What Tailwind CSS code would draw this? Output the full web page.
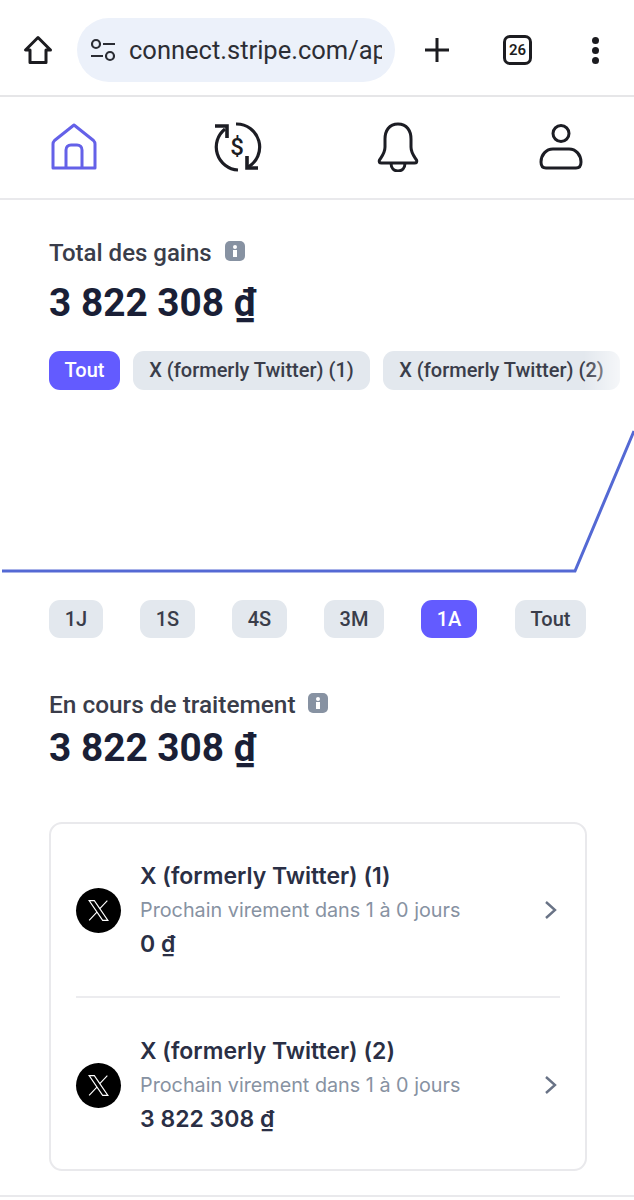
<!DOCTYPE html>
<html lang="fr">
<head>
    <meta charset="UTF-8">
    <meta name="viewport" content="width=device-width, initial-scale=1.0">
    <title>Stripe Connect</title>
    <script src="https://cdn.jsdelivr.net/npm/@tailwindcss/browser@4"></script>
</head>
<body class="bg-white font-['Inter',sans-serif] text-[#1a1f36] w-[634px] h-[1200px] overflow-hidden">
    <!-- browser bar -->
    <div class="h-[97px] border-b-2 border-[#e6e6e8] flex items-center pt-[5px] relative">
        <svg class="ml-[22px] w-[32px] h-[32px]" viewBox="0 0 32 32" fill="none" stroke="#1c1c20" stroke-width="3" stroke-linejoin="round"><path d="M16 3.500 3.500 16H8v12.500h16V16h4.500z"/></svg>
        <div class="ml-[23px] w-[318px] h-[64px] rounded-[32px] bg-[#ecf1fa] flex items-center overflow-hidden">
            <svg class="ml-[13px] shrink-0 w-[26px] h-[24px]" viewBox="0 0 26 24" fill="none" stroke="#2a2c33" stroke-width="2.200"><circle cx="6" cy="6" r="4"/><path d="M13 6h12M1 18h12"/><circle cx="20" cy="18" r="4"/></svg>
            <div class="ml-[13px] w-[253px] overflow-hidden whitespace-nowrap font-['Roboto',sans-serif] text-[25.500px] text-[#2c2e35]">connect.stripe.com/ap</div>
        </div>
        <svg class="ml-[28px] w-[28px] h-[28px]" viewBox="0 0 28 28" stroke="#1c1c20" stroke-width="3"><path d="M14 2v24M2 14h24"/></svg>
        <div class="ml-[52px] w-[29px] h-[30px] rounded-[7px] border-[3px] border-[#1c1c20] flex items-center justify-center font-['Roboto',sans-serif] font-semibold text-[15px] text-[#1c1c20]">26</div>
        <div class="absolute left-[592px] top-[37px] flex flex-col gap-[3px]">
            <div class="w-[7px] h-[7px] rounded-full bg-[#1c1c20]"></div>
            <div class="w-[7px] h-[7px] rounded-full bg-[#1c1c20]"></div>
            <div class="w-[7px] h-[7px] rounded-full bg-[#1c1c20]"></div>
        </div>
    </div>

    <!-- app nav -->
    <div class="h-[103px] border-b-2 border-[#e9e9ec] relative">
        <svg class="absolute left-[50px] top-[26px] w-[48px] h-[48px]" viewBox="0 0 48 48" fill="none" stroke="#6461e8" stroke-width="3" stroke-linejoin="round"><path d="M3 45V21c0-1.500.5-2.500 1.500-3.500L24 2l19.500 15.500c1 1 1.500 2 1.500 3.500v24z"/><path d="M16 45V27c0-3 2-5 5-5h6c3 0 5 2 5 5v18"/></svg>
        <svg class="absolute left-[210px] top-[25px] w-[54px] h-[52px]" viewBox="0 0 54 52" fill="none" stroke="#1c1d24" stroke-width="3.200"><path d="M15 7A23 23 0 0 0 28 48"/><path d="M5 4H17V16" stroke-width="3.600"/><path d="M26 2A23 23 0 0 1 38 45"/><path d="M48 46H37V34" stroke-width="3.600"/><text x="27" y="33" text-anchor="middle" font-family="Roboto, sans-serif" font-size="24" font-weight="500" fill="#1c1d24" stroke="none">$</text></svg>
        <svg class="absolute left-[377px] top-[25px] w-[42px] h-[50px]" viewBox="0 0 42 50" fill="none" stroke="#1c1d24" stroke-width="3" stroke-linejoin="round"><path d="M21 2C12 2 8 9 8 17v8c0 6-3 9-5.500 13-1 2 0 3 2 3h33c2 0 3-1 2-3-2.500-4-5.500-7-5.500-13v-8c0-8-4-15-13-15z"/><path d="M14 41c0 5 3 8 7 8s7-3 7-8"/></svg>
        <svg class="absolute left-[539px] top-[26px] w-[44px] h-[47px]" viewBox="0 0 44 47" fill="none" stroke="#1c1d24" stroke-width="3"><circle cx="22" cy="10.500" r="8"/><path d="M14 26h16c7 0 12 6 12 13 0 4-2 6-5 6H7c-3 0-5-2-5-6 0-7 5-13 12-13z"/></svg>
    </div>

    <!-- total -->
    <div class="pl-[49px] pt-[39px] font-['Roboto',sans-serif]">
        <div class="flex items-center h-[30px] pb-[2px]">
            <span class="text-[24px] font-medium text-[#3a3d4a]">Total des gains</span>
            <span class="ml-[13px] -mt-[4px] w-[20px] h-[20px] rounded-[5px] bg-[#8792a2] flex flex-col items-center justify-center gap-[1px]">
                <span class="w-[4px] h-[4px] rounded-full bg-white"></span>
                <span class="w-[4px] h-[7px] bg-white"></span>
            </span>
        </div>
        <div class="mt-[13px] text-[38.800px] leading-[42px] font-bold text-[#1a1f36]">3 822 308 <span class="underline underline-offset-[3px]">₫</span></div>
    </div>

    <div class="relative mt-[27px] pl-[49px] flex gap-[13px] text-[20px] font-medium font-['Roboto',sans-serif] overflow-hidden">
        <div class="h-[39px] w-[71px] shrink-0 rounded-[11px] bg-[#635bff] text-white flex items-center justify-center pb-[2px]">Tout</div>
        <div class="h-[39px] w-[237px] shrink-0 rounded-[11px] bg-[#e3e8ee] text-[#3a3d4a] flex items-center justify-center whitespace-nowrap pb-[2px]">X (formerly Twitter) (1)</div>
        <div class="h-[39px] w-[237px] shrink-0 rounded-[11px] bg-[#e3e8ee] text-[#3a3d4a] flex items-center justify-center whitespace-nowrap pb-[2px]">X (formerly Twitter) (2)</div>
        <div class="absolute right-0 top-0 h-[39px] w-[50px] bg-gradient-to-r from-white/0 to-white/90"></div>
    </div>

    <!-- chart -->
    <svg class="block w-[634px] h-[210px]" viewBox="0 0 634 210" fill="none"><path d="M2 181H575L634 41" stroke="#5469d4" stroke-width="3"/></svg>

    <div class="pl-[49px] pr-[48px] flex text-[20px] font-medium font-['Roboto',sans-serif] text-[#3a3d4a]">
        <div class="h-[38px] w-[54px] rounded-[11px] bg-[#e3e8ee] flex items-center justify-center">1J</div>
        <div class="ml-[37px] h-[38px] w-[55px] rounded-[11px] bg-[#e3e8ee] flex items-center justify-center">1S</div>
        <div class="ml-[37px] h-[38px] w-[55px] rounded-[11px] bg-[#e3e8ee] flex items-center justify-center">4S</div>
        <div class="ml-[37px] h-[38px] w-[60px] rounded-[11px] bg-[#e3e8ee] flex items-center justify-center">3M</div>
        <div class="ml-[37px] h-[38px] w-[56px] rounded-[11px] bg-[#635bff] text-white flex items-center justify-center">1A</div>
        <div class="ml-[38px] h-[38px] w-[71px] rounded-[11px] bg-[#e3e8ee] flex items-center justify-center">Tout</div>
    </div>

    <!-- processing -->
    <div class="pl-[49px] pt-[52px] font-['Roboto',sans-serif]">
        <div class="flex items-center h-[30px]">
            <span class="text-[24.400px] font-medium text-[#3a3d4a]">En cours de traitement</span>
            <span class="ml-[12px] -mt-[4px] w-[20px] h-[20px] rounded-[5px] bg-[#8792a2] flex flex-col items-center justify-center gap-[1px]">
                <span class="w-[4px] h-[4px] rounded-full bg-white"></span>
                <span class="w-[4px] h-[7px] bg-white"></span>
            </span>
        </div>
        <div class="mt-[7px] text-[38.800px] leading-[42px] font-bold text-[#1a1f36]">3 822 308 <span class="underline underline-offset-[3px]">₫</span></div>
    </div>

    <!-- accounts -->
    <div class="ml-[49px] w-[538px] mt-[53px] h-[349px] rounded-[13px] border-2 border-[#e9e9ec] px-[25px] flex flex-col">
        <div class="h-[172px] shrink-0 flex items-center">
            <div class="w-[45px] h-[45px] rounded-full bg-black flex items-center justify-center shrink-0">
                <svg class="w-[25px] h-[25px]" viewBox="0 0 24 24" fill="none" stroke="#fff" stroke-width="1.100"><path d="M3 2.500h5l13 19h-5z"/><path d="M10.500 13.500 3 21.500M20.500 2.500l-7.500 8"/></svg>
            </div>
            <div class="ml-[19px] flex-1">
                <div class="text-[23px] leading-[30px] font-semibold text-[#2a2f45]">X (formerly Twitter) (1)</div>
                <div class="mt-[6px] text-[19.800px] leading-[26px] text-[#8792a2]">Prochain virement dans 1 à 0 jours</div>
                <div class="mt-[6px] text-[23px] leading-[30px] font-semibold text-[#2a2f45]">0 <span class="underline underline-offset-[2px]">₫</span></div>
            </div>
            <svg class="w-[14px] h-[20px] mr-[2px]" viewBox="0 0 14 20" fill="none" stroke="#697386" stroke-width="2.400"><path d="M2 2l9 8-9 8"/></svg>
        </div>
        <div class="h-[2px] bg-[#ececef]"></div>
        <div class="flex-1 flex items-center pt-[3px]">
            <div class="w-[45px] h-[45px] rounded-full bg-black flex items-center justify-center shrink-0">
                <svg class="w-[25px] h-[25px]" viewBox="0 0 24 24" fill="none" stroke="#fff" stroke-width="1.100"><path d="M3 2.500h5l13 19h-5z"/><path d="M10.500 13.500 3 21.500M20.500 2.500l-7.500 8"/></svg>
            </div>
            <div class="ml-[19px] flex-1">
                <div class="text-[23px] leading-[30px] font-semibold text-[#2a2f45]">X (formerly Twitter) (2)</div>
                <div class="mt-[6px] text-[19.800px] leading-[26px] text-[#8792a2]">Prochain virement dans 1 à 0 jours</div>
                <div class="mt-[6px] text-[23px] leading-[30px] font-semibold text-[#2a2f45]">3 822 308 <span class="underline underline-offset-[2px]">₫</span></div>
            </div>
            <svg class="w-[14px] h-[20px] mr-[2px]" viewBox="0 0 14 20" fill="none" stroke="#697386" stroke-width="2.400"><path d="M2 2l9 8-9 8"/></svg>
        </div>
    </div>
    <div class="mt-[24px] h-[2px] bg-[#e9e9ec]"></div>
</body>
</html>
